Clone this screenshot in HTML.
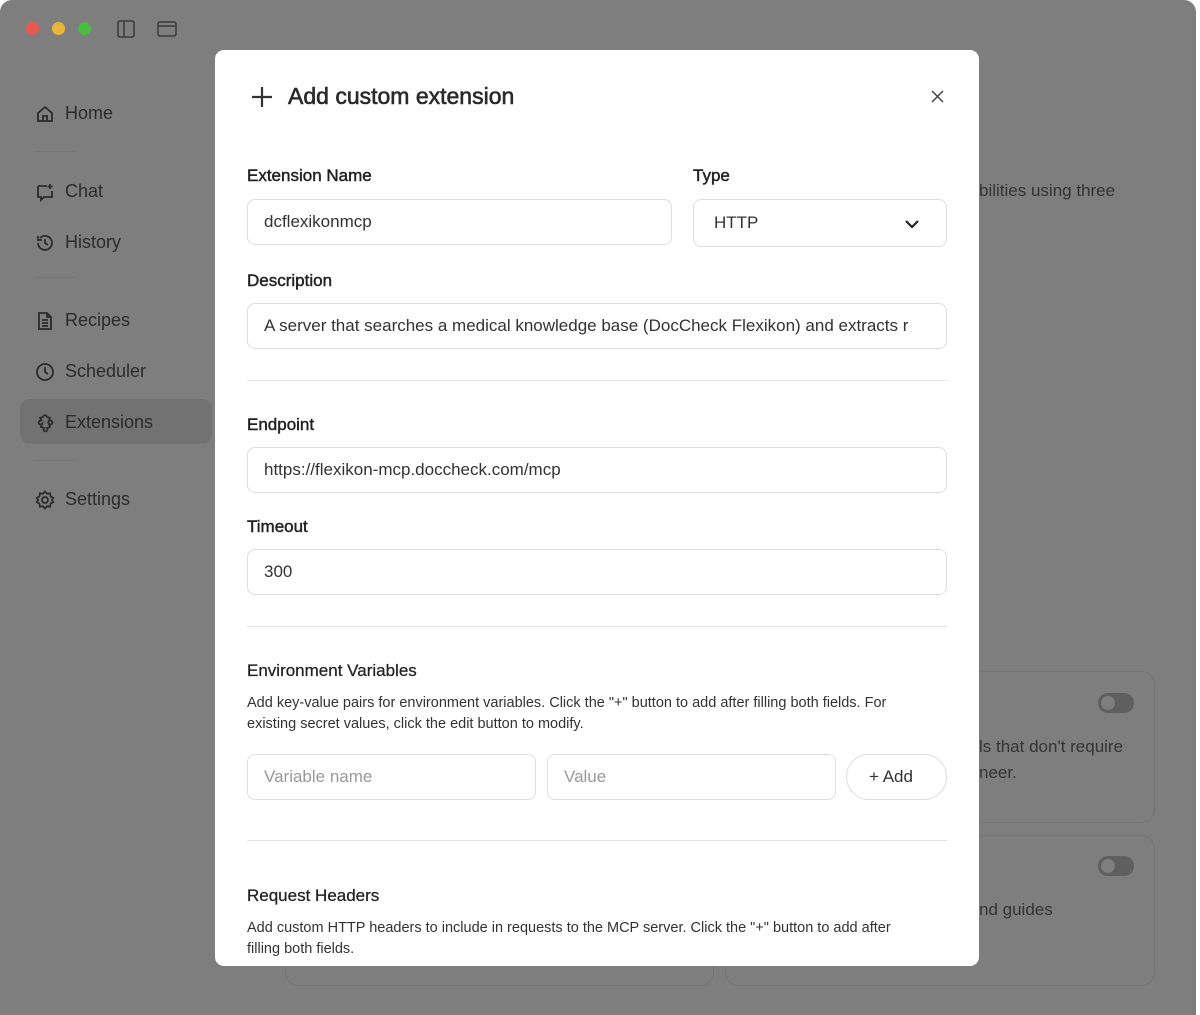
<!DOCTYPE html>
<html><head><meta charset="utf-8"><style>
*{box-sizing:border-box;margin:0;padding:0}
body{width:1200px;height:1015px;overflow:hidden;background:#fff;font-family:"Liberation Sans",sans-serif;position:relative}
.win{position:absolute;left:0;top:0;width:1196px;height:1015px;background:#7e7e7e;border-radius:12px 12px 0 0}
.dot{position:absolute;top:22px;width:13px;height:13px;border-radius:50%}
.nav{position:absolute;left:35px;font-size:18px;color:#2b2b2b;display:flex;align-items:center;gap:10px}
.nav svg{width:20px;height:20px;stroke:#2b2b2b;fill:none;stroke-width:1.8}
.sep{position:absolute;left:35px;width:40px;height:1px;background:#777}
.card{position:absolute;border:1px solid #747474;border-radius:14px}
.tog{position:absolute;width:36px;height:20px;border-radius:10px;background:#5f5f5f}
.tog:after{content:"";position:absolute;left:3px;top:3px;width:14px;height:14px;border-radius:50%;background:#7e7e7e}
.bgt{position:absolute;font-size:17px;color:#333}
.modal{position:absolute;left:215px;top:50px;width:764px;height:916px;background:#fff;border-radius:9px;overflow:hidden}
.lbl{position:absolute;left:32px;font-size:17px;color:#222;-webkit-text-stroke:0.45px #222}
.inp{position:absolute;left:32px;width:700px;height:46px;border:1px solid #dedede;border-radius:8px;font-size:17px;color:#333;padding:0 16px;line-height:44px;white-space:nowrap;overflow:hidden}
.hr{position:absolute;left:32px;width:700px;height:1px;background:#e3e3e3}
.desc{position:absolute;left:32px;font-size:14.5px;color:#333;line-height:21px;width:690px}
</style></head><body>
<div class="win">
<div class="dot" style="left:26px;background:#e9574d"></div>
<div class="dot" style="left:52px;background:#eab53a"></div>
<div class="dot" style="left:78px;background:#4cbb43"></div>
<svg style="position:absolute;left:117px;top:20px" width="18" height="18" fill="none" stroke="#3a3a3a" stroke-width="1.5"><rect x="1" y="1" width="16" height="16" rx="2"/><line x1="7" y1="1" x2="7" y2="17"/></svg>
<svg style="position:absolute;left:157px;top:21px" width="20" height="16" fill="none" stroke="#3a3a3a" stroke-width="1.5"><rect x="1" y="1" width="18" height="14" rx="2"/><line x1="1" y1="5" x2="19" y2="5"/></svg>
<div class="nav" style="top:103px"><svg viewBox="0 0 20 20"><path d="M3 9l7-6 7 6v8H3z"/><path d="M8 17v-5h4v5"/></svg>Home</div>
<div class="sep" style="top:151px"></div>
<div class="nav" style="top:181px"><svg viewBox="0 0 20 20"><path d="M3 4h9M3 4v11h3v3l3-3h8v-6"/><path d="M15 2v5M12.5 4.5h5"/></svg>Chat</div>
<div class="nav" style="top:232px"><svg viewBox="0 0 20 20"><path d="M3 10a7 7 0 1 0 2-5"/><path d="M3 3v4h4"/><path d="M10 6v4l3 2"/></svg>History</div>
<div class="sep" style="top:277px"></div>
<div class="nav" style="top:310px"><svg viewBox="0 0 20 20"><path d="M4 2h8l4 4v12H4z"/><path d="M7 9h6M7 12h6M7 15h6M12 2v4h4"/></svg>Recipes</div>
<div class="nav" style="top:361px"><svg viewBox="0 0 20 20"><circle cx="10" cy="10" r="8"/><path d="M10 5v5l3 2"/></svg>Scheduler</div>
<div style="position:absolute;left:20px;top:399px;width:192px;height:45px;background:#727272;border-radius:10px"></div>
<div class="nav" style="top:412px"><svg viewBox="0 0 20 20"><path d="M9 2.5a2 2 0 0 1 3 1.5l3 1-1 3a2 2 0 1 1 0 3l1 3-3 1a2 2 0 1 1-3 0l-3-1 1-3a2 2 0 1 1 0-3L5 5l3-1a2 2 0 0 1 1-1.5z"/></svg>Extensions</div>
<div class="sep" style="top:460px"></div>
<div class="nav" style="top:489px"><svg viewBox="0 0 20 20"><circle cx="10" cy="10" r="3"/><path d="M10 1.5l2 2.3 3-.5.6 3 2.6 1.7-1.4 2 1.4 2-2.6 1.7-.6 3-3-.5-2 2.3-2-2.3-3 .5-.6-3L1.8 12l1.4-2-1.4-2 2.6-1.7.6-3 3 .5z"/></svg>Settings</div>
<div class="bgt" style="left:979px;top:181px">bilities using three</div>
<div class="card" style="left:725px;top:671px;width:430px;height:152px"></div>
<div class="tog" style="left:1098px;top:693px"></div>
<div class="bgt" style="left:979px;top:737px">ls that don't require</div>
<div class="bgt" style="left:979px;top:763px">neer.</div>
<div class="card" style="left:725px;top:835px;width:430px;height:151px"></div>
<div class="tog" style="left:1098px;top:856px"></div>
<div class="bgt" style="left:979px;top:900px">nd guides</div>
<div class="card" style="left:285px;top:835px;width:429px;height:151px"></div>
</div>
<div class="modal">
<svg style="position:absolute;left:36px;top:36px" width="22" height="22" stroke="#333" stroke-width="2.2"><path d="M11 1v20M1 11h20"/></svg>
<div style="position:absolute;left:73px;top:33px;font-size:23px;color:#2a2a2a;-webkit-text-stroke:0.6px #2a2a2a">Add custom extension</div>
<svg style="position:absolute;left:716px;top:40px" width="13" height="13" stroke="#444" stroke-width="1.5"><path d="M1 1l11 11M12 1L1 12"/></svg>
<div class="lbl" style="top:116px">Extension Name</div>
<div class="lbl" style="left:478px;top:116px">Type</div>
<div class="inp" style="top:149px;width:425px">dcflexikonmcp</div>
<div class="inp" style="left:478px;top:149px;width:254px;padding-left:20px;height:48px;line-height:46px">HTTP<svg style="position:absolute;right:26px;top:19px" width="16" height="10" fill="none" stroke="#222" stroke-width="2.2"><path d="M2 2l6 6 6-6"/></svg></div>
<div class="lbl" style="top:221px">Description</div>
<div class="inp" style="top:253px">A server that searches a medical knowledge base (DocCheck Flexikon) and extracts r</div>
<div class="hr" style="top:330px"></div>
<div class="lbl" style="top:365px">Endpoint</div>
<div class="inp" style="top:397px">https://flexikon-mcp.doccheck.com/mcp</div>
<div class="lbl" style="top:467px">Timeout</div>
<div class="inp" style="top:499px">300</div>
<div class="hr" style="top:576px"></div>
<div class="lbl" style="top:611px;-webkit-text-stroke:0.25px #222">Environment Variables</div>
<div class="desc" style="top:643px">Add key-value pairs for environment variables. Click the "+" button to add after filling both fields. For<br>existing secret values, click the edit button to modify.</div>
<div class="inp" style="top:704px;width:289px;color:#999">Variable name</div>
<div class="inp" style="left:332px;top:704px;width:289px;color:#999">Value</div>
<div class="inp" style="left:631px;top:704px;width:101px;border-radius:23px;padding:0 0 0 22px">+ Add</div>
<div class="hr" style="top:790px"></div>
<div class="lbl" style="top:836px;-webkit-text-stroke:0.25px #222">Request Headers</div>
<div class="desc" style="top:868px">Add custom HTTP headers to include in requests to the MCP server. Click the "+" button to add after<br>filling both fields.</div>
</div>
</body></html>
